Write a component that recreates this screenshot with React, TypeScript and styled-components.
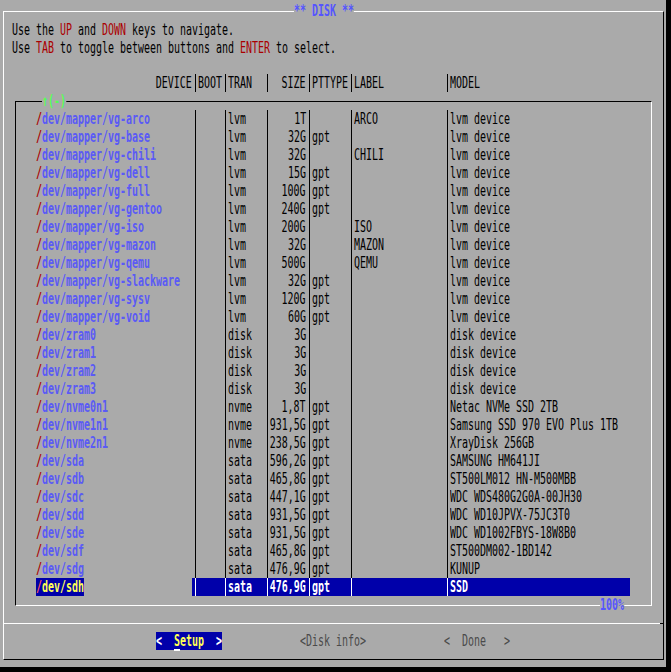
import styled, { createGlobalStyle } from "styled-components";

// terminal cell: 6px wide, 18px tall. DejaVu Sans Mono 16px advances 9.63px,
// so glyphs are squeezed horizontally to fit the cell.
const SCALE = 0.6229;
const CELL = 6;

const GlobalStyle = createGlobalStyle`
  html, body {
    margin: 0;
    background: #000;
  }
  body {
    font-family: "DejaVu Sans Mono", monospace;
    font-size: 16px;
  }
`;

const Screen = styled.div`
  box-sizing: border-box;
  width: 666px;
  height: 667px;
  padding: 11px 0 0 3px;
  background: #aaaaaa;
  overflow: hidden;
`;

const Dialog = styled.div`
  position: relative;
  box-sizing: border-box;
  width: 661px;
  padding: 8px 0 9px 0;
  border-top: 1px solid #fff;
  border-left: 1px solid #fff;
  border-right: 1px solid #000;
  border-bottom: 1px solid #000;
  color: #000;
`;

const Glyphs = styled.span<{ $right?: boolean }>`
  display: inline-block;
  flex-shrink: 0;
  height: 18px;
  line-height: 18px;
  white-space: pre;
  transform: scaleX(${SCALE});
  transform-origin: ${(p) => (p.$right ? "right" : "left")} center;
`;

const Title = styled(Glyphs)`
  position: absolute;
  left: 290px;
  top: -10px;
  background: #aaaaaa;
  color: #5555ff;
  font-weight: bold;
`;

const Instructions = styled.div`
  margin: 0 0 18px 8px;
`;

const Line = styled.div`
  height: 18px;
`;

const Key = styled.span`
  color: #aa0000;
`;

const HeaderRow = styled.div`
  display: flex;
  height: 18px;
  margin-left: 32px;
`;

const ListBox = styled.div`
  position: relative;
  box-sizing: border-box;
  width: 637px;
  margin: 9px 0 0 11px;
  padding: 8px 0 9px 20px;
  border-top: 1px solid #000;
  border-left: 1px solid #000;
  border-right: 1px solid #fff;
  border-bottom: 1px solid #fff;
`;

const ScrollMark = styled(Glyphs)`
  position: absolute;
  left: 26px;
  top: -10px;
  background: #aaaaaa;
  color: #55ff55;
  font-weight: bold;
`;

const Percent = styled(Glyphs)`
  position: absolute;
  left: 584px;
  top: 494px;
  background: #aaaaaa;
  color: #5555ff;
  font-weight: bold;
`;

const Row = styled.div`
  display: flex;
  height: 18px;
`;

const RowRest = styled.div<{ $selected?: boolean }>`
  display: flex;
  background: ${(p) => (p.$selected ? "#0000aa" : "transparent")};
  color: ${(p) => (p.$selected ? "#fff" : "#000")};
  font-weight: ${(p) => (p.$selected ? "bold" : "normal")};
`;

const Cell = styled.div<{ $cols: number; $right?: boolean }>`
  flex: 0 0 ${(p) => p.$cols * CELL}px;
  min-width: 0;
  display: flex;
  justify-content: ${(p) => (p.$right ? "flex-end" : "flex-start")};
  height: 18px;
  white-space: nowrap;
`;

const Sep = styled.div<{ $light?: boolean }>`
  flex: 0 0 ${CELL}px;
  min-width: 0;
  height: 18px;
  background: linear-gradient(
    to right,
    transparent 3px,
    ${(p) => (p.$light ? "#fff" : "#000")} 3px,
    ${(p) => (p.$light ? "#fff" : "#000")} 4px,
    transparent 4px
  );
`;

const DevName = styled(Glyphs)<{ $selected?: boolean }>`
  color: ${(p) => (p.$selected ? "#ffff55" : "#5a5af6")};
  background: ${(p) => (p.$selected ? "#0000aa" : "transparent")};
  font-weight: bold;
`;

const Slash = styled.span<{ $selected?: boolean }>`
  color: ${(p) => (p.$selected ? "#ff5555" : "#aa0000")};
`;

const Divider = styled.div`
  position: relative;
  height: 1px;
  margin-top: 17px;
  background: #fff;

  &::after {
    content: "";
    position: absolute;
    right: 0;
    top: 0;
    width: 3px;
    height: 1px;
    background: #000;
  }
`;

const ButtonBar = styled.div`
  display: flex;
  gap: 78px;
  height: 18px;
  margin-top: 8px;
  padding-left: 152px;
`;

const Button = styled.div<{ $active?: boolean }>`
  flex: 0 0 ${11 * CELL}px;
  min-width: 0;
  display: flex;
  height: 18px;
  background: ${(p) => (p.$active ? "#0000aa" : "transparent")};
  color: ${(p) => (p.$active ? "#fff" : "#4a4a4a")};
  font-weight: ${(p) => (p.$active ? "bold" : "normal")};
`;

const ButtonLabel = styled.span<{ $active?: boolean }>`
  color: ${(p) => (p.$active ? "#ffff55" : "inherit")};
`;

const HotKey = styled.span`
  text-decoration: underline;
  text-decoration-color: #fff;
  text-decoration-thickness: 2px;
  text-underline-offset: 3px;
`;

type Disk = {
  dev: string;
  tran: string;
  size: string;
  pttype?: string;
  label?: string;
  model: string;
};

const disks: Disk[] = [
  { dev: "/dev/mapper/vg-arco", tran: "lvm", size: "1T", label: "ARCO", model: "lvm device" },
  { dev: "/dev/mapper/vg-base", tran: "lvm", size: "32G", pttype: "gpt", model: "lvm device" },
  { dev: "/dev/mapper/vg-chili", tran: "lvm", size: "32G", label: "CHILI", model: "lvm device" },
  { dev: "/dev/mapper/vg-dell", tran: "lvm", size: "15G", pttype: "gpt", model: "lvm device" },
  { dev: "/dev/mapper/vg-full", tran: "lvm", size: "100G", pttype: "gpt", model: "lvm device" },
  { dev: "/dev/mapper/vg-gentoo", tran: "lvm", size: "240G", pttype: "gpt", model: "lvm device" },
  { dev: "/dev/mapper/vg-iso", tran: "lvm", size: "200G", label: "ISO", model: "lvm device" },
  { dev: "/dev/mapper/vg-mazon", tran: "lvm", size: "32G", label: "MAZON", model: "lvm device" },
  { dev: "/dev/mapper/vg-qemu", tran: "lvm", size: "500G", label: "QEMU", model: "lvm device" },
  { dev: "/dev/mapper/vg-slackware", tran: "lvm", size: "32G", pttype: "gpt", model: "lvm device" },
  { dev: "/dev/mapper/vg-sysv", tran: "lvm", size: "120G", pttype: "gpt", model: "lvm device" },
  { dev: "/dev/mapper/vg-void", tran: "lvm", size: "60G", pttype: "gpt", model: "lvm device" },
  { dev: "/dev/zram0", tran: "disk", size: "3G", model: "disk device" },
  { dev: "/dev/zram1", tran: "disk", size: "3G", model: "disk device" },
  { dev: "/dev/zram2", tran: "disk", size: "3G", model: "disk device" },
  { dev: "/dev/zram3", tran: "disk", size: "3G", model: "disk device" },
  { dev: "/dev/nvme0n1", tran: "nvme", size: "1,8T", pttype: "gpt", model: "Netac NVMe SSD 2TB" },
  { dev: "/dev/nvme1n1", tran: "nvme", size: "931,5G", pttype: "gpt", model: "Samsung SSD 970 EVO Plus 1TB" },
  { dev: "/dev/nvme2n1", tran: "nvme", size: "238,5G", pttype: "gpt", model: "XrayDisk 256GB" },
  { dev: "/dev/sda", tran: "sata", size: "596,2G", pttype: "gpt", model: "SAMSUNG HM641JI" },
  { dev: "/dev/sdb", tran: "sata", size: "465,8G", pttype: "gpt", model: "ST500LM012 HN-M500MBB" },
  { dev: "/dev/sdc", tran: "sata", size: "447,1G", pttype: "gpt", model: "WDC WDS480G2G0A-00JH30" },
  { dev: "/dev/sdd", tran: "sata", size: "931,5G", pttype: "gpt", model: "WDC WD10JPVX-75JC3T0" },
  { dev: "/dev/sde", tran: "sata", size: "931,5G", pttype: "gpt", model: "WDC WD1002FBYS-18W8B0" },
  { dev: "/dev/sdf", tran: "sata", size: "465,8G", pttype: "gpt", model: "ST500DM002-1BD142" },
  { dev: "/dev/sdg", tran: "sata", size: "476,9G", pttype: "gpt", model: "KUNUP" },
  { dev: "/dev/sdh", tran: "sata", size: "476,9G", pttype: "gpt", model: "SSD" },
];

const SELECTED = disks.length - 1;

const DiskRow = ({ disk, selected }: { disk: Disk; selected: boolean }) => (
  <Row>
    <Cell $cols={26}>
      <DevName $selected={selected}>
        <Slash $selected={selected}>/</Slash>
        {disk.dev.slice(1)}
      </DevName>
    </Cell>
    <RowRest $selected={selected}>
      <Sep $light={selected} />
      <Cell $cols={4} />
      <Sep $light={selected} />
      <Cell $cols={6}>
        <Glyphs>{disk.tran}</Glyphs>
      </Cell>
      <Sep $light={selected} />
      <Cell $cols={6} $right>
        <Glyphs $right>{disk.size}</Glyphs>
      </Cell>
      <Sep $light={selected} />
      <Cell $cols={6}>
        <Glyphs>{disk.pttype ?? ""}</Glyphs>
      </Cell>
      <Sep $light={selected} />
      <Cell $cols={15}>
        <Glyphs>{disk.label ?? ""}</Glyphs>
      </Cell>
      <Sep $light={selected} />
      <Cell $cols={30}>
        <Glyphs>{disk.model}</Glyphs>
      </Cell>
    </RowRest>
  </Row>
);

const App = () => {
  return (
    <>
      <GlobalStyle />
      <Screen>
        <Dialog>
          <Title>** DISK **</Title>
          <Instructions>
            <Line>
              <Glyphs>
                Use the <Key>UP</Key> and <Key>DOWN</Key> keys to navigate.
              </Glyphs>
            </Line>
            <Line>
              <Glyphs>
                Use <Key>TAB</Key> to toggle between buttons and <Key>ENTER</Key> to
                select.
              </Glyphs>
            </Line>
          </Instructions>

          <HeaderRow>
            <Cell $cols={26} $right>
              <Glyphs $right>DEVICE</Glyphs>
            </Cell>
            <Sep />
            <Cell $cols={4}>
              <Glyphs>BOOT</Glyphs>
            </Cell>
            <Sep />
            <Cell $cols={6}>
              <Glyphs>TRAN</Glyphs>
            </Cell>
            <Sep />
            <Cell $cols={6} $right>
              <Glyphs $right>SIZE</Glyphs>
            </Cell>
            <Sep />
            <Cell $cols={6}>
              <Glyphs>PTTYPE</Glyphs>
            </Cell>
            <Sep />
            <Cell $cols={15}>
              <Glyphs>LABEL</Glyphs>
            </Cell>
            <Sep />
            <Cell $cols={30}>
              <Glyphs>MODEL</Glyphs>
            </Cell>
          </HeaderRow>

          <ListBox>
            <ScrollMark>↑(-)</ScrollMark>
            {disks.map((disk, i) => (
              <DiskRow key={disk.dev} disk={disk} selected={i === SELECTED} />
            ))}
            <Percent>100%</Percent>
          </ListBox>

          <Divider />

          <ButtonBar>
            <Button $active>
              <Glyphs>
                {"<  "}
                <ButtonLabel $active>
                  <HotKey>S</HotKey>etup
                </ButtonLabel>
                {"  >"}
              </Glyphs>
            </Button>
            <Button>
              <Glyphs>{"<Disk info>"}</Glyphs>
            </Button>
            <Button>
              <Glyphs>{"<  Done   >"}</Glyphs>
            </Button>
          </ButtonBar>
        </Dialog>
      </Screen>
    </>
  );
};

export default App;
